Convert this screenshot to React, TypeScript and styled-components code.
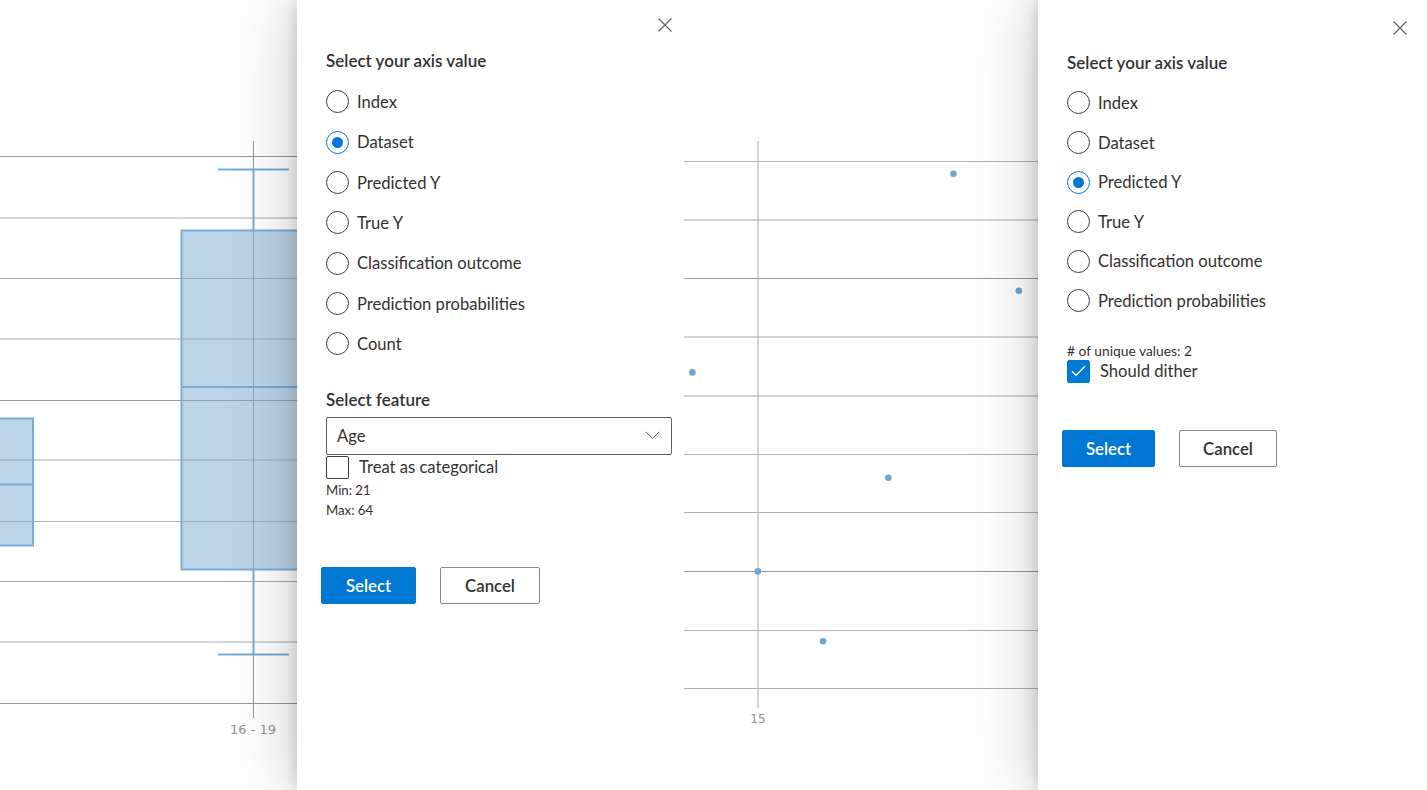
import React from "react";
import styled, { createGlobalStyle } from "styled-components";

const GlobalStyle = createGlobalStyle`
  html, body { margin: 0; padding: 0; background: #fff; overflow: hidden; }
  body { font-family: Lato, "Liberation Sans", sans-serif; color: #323130; }
  * { box-sizing: border-box; }
`;

const Page = styled.div`
  display: flex;
  width: 1427px;
  height: 790px;
  overflow: hidden;
`;

const Screen = styled.div<{ $w: number }>`
  display: flex;
  flex: none;
  width: ${(p) => p.$w}px;
  height: 100%;
  overflow: hidden;
`;

const ChartArea = styled.div`
  flex: 1;
  min-width: 0;
  height: 100%;
  background: #fff;
  svg {
    display: block;
  }
`;

const Panel = styled.aside<{ $w: number }>`
  position: relative;
  z-index: 1;
  flex: none;
  width: ${(p) => p.$w}px;
  height: 100%;
  background: #fff;
  box-shadow: 0 0 66px rgba(0, 0, 0, 0.22), 0 0 16px rgba(0, 0, 0, 0.18);
  display: flex;
  flex-direction: column;
`;

const Header = styled.div<{ $h: number; $top: number; $right: number }>`
  display: flex;
  justify-content: flex-end;
  align-items: flex-start;
  height: ${(p) => p.$h}px;
  padding: ${(p) => p.$top}px ${(p) => p.$right}px 0 0;
  flex: none;
`;

const CloseButton = styled.button`
  width: 14px;
  height: 14px;
  padding: 0;
  border: 0;
  background: transparent;
  display: flex;
  cursor: pointer;
`;

const Body = styled.div`
  display: flex;
  flex-direction: column;
  align-items: flex-start;
  padding-left: 29px;
`;

const Title = styled.div<{ $mt?: number }>`
  margin-top: ${(p) => p.$mt ?? 0}px;
  font-size: 17px;
  line-height: 22px;
  font-weight: 600;
  color: #323130;
`;

const RadioList = styled.div<{ $mt: number }>`
  display: flex;
  flex-direction: column;
  margin-top: ${(p) => p.$mt}px;
`;

const RadioRow = styled.label<{ $h: number }>`
  display: flex;
  align-items: center;
  gap: 8px;
  height: ${(p) => p.$h}px;
  font-size: 16.6px;
  color: #323130;
`;

const RadioCircle = styled.span<{ $on?: boolean }>`
  flex: none;
  width: 23px;
  height: 23px;
  border-radius: 50%;
  border: 1.2px solid ${(p) => (p.$on ? "#0078d4" : "#3b3a39")};
  display: flex;
  align-items: center;
  justify-content: center;
  &::after {
    content: "";
    display: ${(p) => (p.$on ? "block" : "none")};
    width: 11px;
    height: 11px;
    border-radius: 50%;
    background: #0078d4;
  }
`;

const Dropdown = styled.div<{ $mt: number }>`
  margin-top: ${(p) => p.$mt}px;
  width: 346px;
  height: 38px;
  display: flex;
  align-items: center;
  justify-content: space-between;
  padding: 0 11px 0 10px;
  border: 1px solid #605e5c;
  border-radius: 2px;
  font-size: 16.6px;
  color: #323130;
`;

const CheckRow = styled.label<{ $mt: number }>`
  margin-top: ${(p) => p.$mt}px;
  display: flex;
  align-items: center;
  gap: 10px;
  height: 23px;
  font-size: 16.6px;
  color: #323130;
`;

const CheckBox = styled.span<{ $on?: boolean }>`
  flex: none;
  width: 23px;
  height: 23px;
  border-radius: 2px;
  border: 1.2px solid ${(p) => (p.$on ? "#0078d4" : "#3b3a39")};
  background: ${(p) => (p.$on ? "#0078d4" : "#fff")};
  display: flex;
  align-items: center;
  justify-content: center;
`;

const SmallText = styled.div<{ $mt?: number; $lh: number; $size: number }>`
  margin-top: ${(p) => p.$mt ?? 0}px;
  font-size: ${(p) => p.$size}px;
  line-height: ${(p) => p.$lh}px;
  color: #323130;
`;

const ButtonRow = styled.div<{ $mt: number }>`
  margin-top: ${(p) => p.$mt}px;
  margin-left: -5px;
  display: flex;
  gap: 24px;
`;

const Button = styled.button<{ $primary?: boolean; $w: number; $h: number }>`
  width: ${(p) => p.$w}px;
  height: ${(p) => p.$h}px;
  border-radius: 2px;
  font-family: Lato, "Liberation Sans", sans-serif;
  font-size: 16.8px;
  font-weight: 600;
  padding: 0;
  cursor: pointer;
  border: 1px solid ${(p) => (p.$primary ? "#0078d4" : "#8a8886")};
  background: ${(p) => (p.$primary ? "#0078d4" : "#fff")};
  color: ${(p) => (p.$primary ? "#fff" : "#323130")};
`;

const CloseIcon = () => (
  <svg width="14" height="14" viewBox="0 0 14 14">
    <path d="M0.5 0.5 L13.5 13.5 M13.5 0.5 L0.5 13.5" stroke="#605e5c" strokeWidth="1.1" fill="none" />
  </svg>
);

const Chevron = () => (
  <svg width="15" height="9" viewBox="0 0 15 9">
    <path d="M0.8 0.8 L7.5 7.6 L14.2 0.8" stroke="#605e5c" strokeWidth="1" fill="none" />
  </svg>
);

const CheckMark = () => (
  <svg width="15" height="12" viewBox="0 0 15 12">
    <path d="M1 6.2 L5 10.3 L14 1.2" stroke="#fff" strokeWidth="1.3" fill="none" />
  </svg>
);

const Radios = ({ items, selected, rowH, mt }: { items: string[]; selected: string; rowH: number; mt: number }) => (
  <RadioList $mt={mt}>
    {items.map((it) => (
      <RadioRow key={it} $h={rowH}>
        <RadioCircle $on={it === selected} />
        {it}
      </RadioRow>
    ))}
  </RadioList>
);

const BLUE = "#78acd4";
const FILL = "#7aa9d0";

const LeftChart = () => {
  const grid: [number, string][] = [
    [156.5, "#999"],
    [218, "#aaa"],
    [278.5, "#aaa"],
    [339, "#aaa"],
    [400.5, "#999"],
    [460, "#aaa"],
    [521.5, "#b0b0b0"],
    [581.5, "#aaa"],
    [642, "#aaa"],
    [703.5, "#999"],
  ];
  return (
    <svg width="297" height="790">
      {grid.map(([y, c]) => (
        <line key={y} x1="0" x2="297" y1={y} y2={y} stroke={c} strokeWidth="1" />
      ))}
      <line x1="253.5" x2="253.5" y1="141" y2="718" stroke="#999" strokeWidth="1" />
      <rect x="-10" y="418.5" width="43" height="127" fill={FILL} fillOpacity="0.5" stroke={BLUE} strokeWidth="2" />
      <line x1="-10" x2="33" y1="484.5" y2="484.5" stroke={BLUE} strokeWidth="2" />
      <rect x="181.5" y="230.5" width="140" height="339" fill={FILL} fillOpacity="0.5" stroke={BLUE} strokeWidth="2" />
      <line x1="181" x2="297" y1="387" y2="387" stroke={BLUE} strokeWidth="2" />
      <line x1="253.5" x2="253.5" y1="169" y2="230" stroke={BLUE} strokeWidth="2" />
      <line x1="253.5" x2="253.5" y1="570" y2="654" stroke={BLUE} strokeWidth="2" />
      <line x1="218" x2="289" y1="169.5" y2="169.5" stroke={BLUE} strokeWidth="2" />
      <line x1="218" x2="289" y1="654.5" y2="654.5" stroke={BLUE} strokeWidth="2" />
      <text x="253" y="733.5" textAnchor="middle" fontFamily="'DejaVu Sans', Verdana, sans-serif" fontSize="13" fill="#929292">
        16 - 19
      </text>
    </svg>
  );
};

const RightChart = () => {
  const grid: [number, string][] = [
    [161.5, "#b0b0b0"],
    [220, "#aaa"],
    [278.5, "#999"],
    [337, "#aaa"],
    [396, "#aaa"],
    [454.5, "#b0b0b0"],
    [512.5, "#b0b0b0"],
    [571.5, "#999"],
    [630.5, "#b0b0b0"],
    [688.5, "#b0b0b0"],
  ];
  const dots: [number, number][] = [
    [269.5, 173.7],
    [334.8, 290.7],
    [8.4, 372.4],
    [204.4, 477.7],
    [73.8, 571.4],
    [139, 641.3],
  ];
  return (
    <svg width="354" height="790">
      {grid.map(([y, c]) => (
        <line key={y} x1="0" x2="354" y1={y} y2={y} stroke={c} strokeWidth="1" />
      ))}
      <line x1="74" x2="74" y1="141" y2="708" stroke="#aaa" strokeWidth="1" />
      {dots.map(([x, y]) => (
        <circle key={x} cx={x} cy={y} r="3.3" fill="#6fa5d2" />
      ))}
      <text x="74" y="722.5" textAnchor="middle" fontFamily="'DejaVu Sans', Verdana, sans-serif" fontSize="12" fill="#929292">
        15
      </text>
    </svg>
  );
};

const items1 = ["Index", "Dataset", "Predicted Y", "True Y", "Classification outcome", "Prediction probabilities", "Count"];
const items2 = ["Index", "Dataset", "Predicted Y", "True Y", "Classification outcome", "Prediction probabilities"];

export default function App() {
  return (
    <>
      <GlobalStyle />
      <Page>
        <Screen $w={684}>
          <ChartArea>
            <LeftChart />
          </ChartArea>
          <Panel $w={387}>
            <Header $h={50} $top={18} $right={12}>
              <CloseButton aria-label="Close">
                <CloseIcon />
              </CloseButton>
            </Header>
            <Body>
              <Title>Select your axis value</Title>
              <Radios items={items1} selected="Dataset" rowH={40.33} mt={9.8} />
              <Title $mt={24.8}>Select feature</Title>
              <Dropdown $mt={6}>
                Age
                <Chevron />
              </Dropdown>
              <CheckRow $mt={1}>
                <CheckBox />
                Treat as categorical
              </CheckRow>
              <SmallText $mt={1} $lh={20} $size={13.2}>Min: 21</SmallText>
              <SmallText $lh={20} $size={13.2}>Max: 64</SmallText>
              <ButtonRow $mt={47}>
                <Button $primary $w={95} $h={37}>Select</Button>
                <Button $w={100} $h={37}>Cancel</Button>
              </ButtonRow>
            </Body>
          </Panel>
        </Screen>
        <Screen $w={743}>
          <ChartArea>
            <RightChart />
          </ChartArea>
          <Panel $w={389}>
            <Header $h={52} $top={20.5} $right={20}>
              <CloseButton aria-label="Close">
                <CloseIcon />
              </CloseButton>
            </Header>
            <Body>
              <Title>Select your axis value</Title>
              <Radios items={items2} selected="Predicted Y" rowH={39.6} mt={9.2} />
              <SmallText $mt={22.2} $lh={16} $size={13.8}># of unique values: 2</SmallText>
              <CheckRow $mt={1}>
                <CheckBox $on>
                  <CheckMark />
                </CheckBox>
                Should dither
              </CheckRow>
              <ButtonRow $mt={47}>
                <Button $primary $w={93} $h={37}>Select</Button>
                <Button $w={98} $h={37}>Cancel</Button>
              </ButtonRow>
            </Body>
          </Panel>
        </Screen>
      </Page>
    </>
  );
}
